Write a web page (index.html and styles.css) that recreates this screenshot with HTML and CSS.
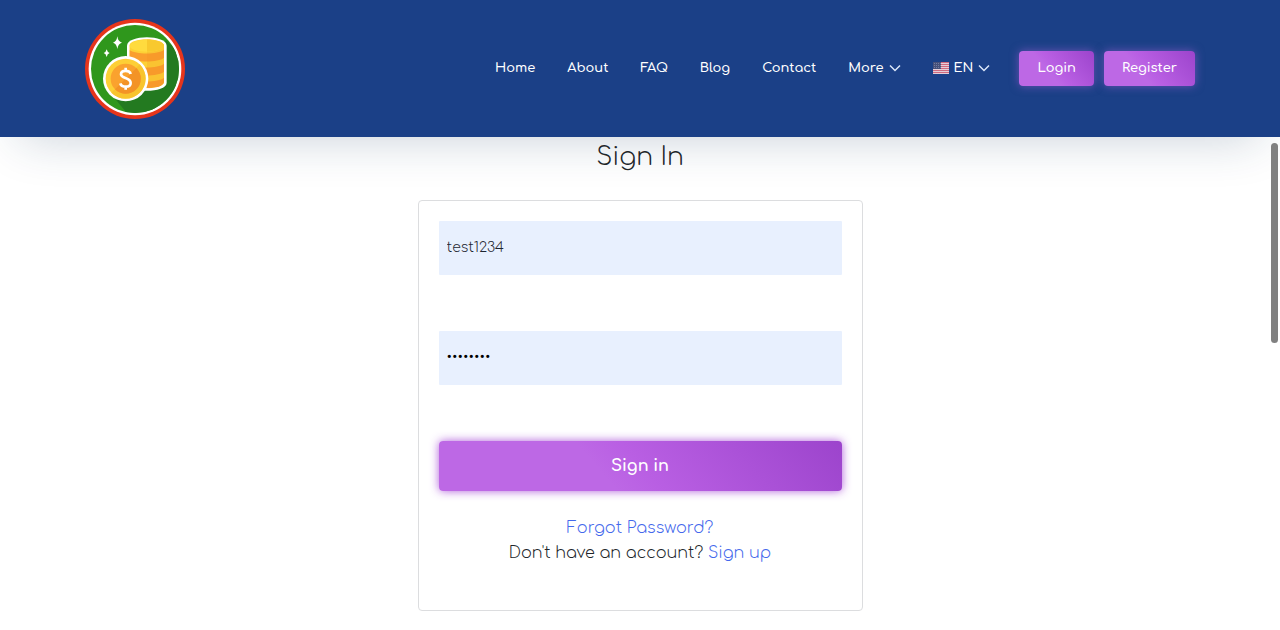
FILE: index.html
```html
<!DOCTYPE html>
<html lang="en">
<head>
<meta charset="utf-8">
<meta name="viewport" content="width=device-width, initial-scale=1">
<title>Sign In</title>
<link rel="stylesheet" href="styles.css">
</head>
<body>
<header class="header">
  <div class="header-inner">
    <a class="logo" href="#" aria-label="Home page">
      <svg viewBox="45 42 300 300" width="100" height="100" aria-hidden="true">
        <defs>
          <clipPath id="disc"><circle cx="195" cy="192" r="132"/></clipPath>
          <clipPath id="stack"><path d="M178 122C178 96 282 96 282 122V230C282 256 178 256 178 230Z"/></clipPath>
        </defs>
        <circle cx="195" cy="192" r="150" fill="#e6351b"/>
        <circle cx="195" cy="192" r="139" fill="#fff"/>
        <circle cx="195" cy="192" r="132" fill="#2f971c"/>
        <path clip-path="url(#disc)" d="M288 105L360 177V360H200L126 270L220 240Z" fill="#237a20"/>
        <path d="M171 122C171 88 290 88 290 122V233C290 265 171 265 171 233Z" fill="#fff"/>
        <g clip-path="url(#stack)">
          <rect x="175" y="95" width="112" height="160" fill="#fdd035"/>
          <path d="M178 134C196 149 264 149 282 134V158C264 173 196 173 178 158Z" fill="#fa9e2d"/>
          <path d="M178 176C196 191 264 191 282 176V200C264 215 196 215 178 200Z" fill="#fa9e2d"/>
          <path d="M178 218C196 233 264 233 282 218V240C264 252 196 252 178 240Z" fill="#fa9e2d"/>
          <rect x="231" y="95" width="52" height="160" fill="#f18a20" opacity=".18"/>
        </g>
        <ellipse cx="230" cy="122" rx="51" ry="18" fill="#ffdb3e"/>
        <path d="M231 104A51 18 0 0 1 231 140Z" fill="#f8c92e"/>
        <circle cx="167" cy="221" r="68" fill="#fff"/>
        <circle cx="167" cy="221" r="60" fill="#fdcf36"/>
        <path d="M124 263A60 60 0 0 0 209 178Z" fill="#f8c42e"/>
        <circle cx="167" cy="221" r="45" fill="#faa22e"/>
        <path d="M135 253A45 45 0 0 0 199 189Z" fill="#f39326"/>
        <path d="M182 207C179 195 153 194 153 208C153 222 182 216 182 234C182 249 154 248 151 235M167 188V199M167 243V254" fill="none" stroke="#fff" stroke-width="8"/>
        <path d="M142 94Q144 110 156 113Q144 116 142 132Q140 116 129 113Q140 110 142 94Z" fill="#fff"/>
        <path d="M110 133Q112 142 119 144Q112 146 110 156Q108 146 101 144Q108 142 110 133Z" fill="#fff"/>
      </svg>
    </a>
    <nav class="nav" aria-label="Main">
      <a class="nav-link" href="#">Home</a>
      <a class="nav-link" href="#">About</a>
      <a class="nav-link" href="#">FAQ</a>
      <a class="nav-link" href="#">Blog</a>
      <a class="nav-link" href="#">Contact</a>
      <button class="nav-menu" type="button">More
        <svg class="chevron" viewBox="0 0 12 8" width="12" height="8" aria-hidden="true"><path d="M1 1.5L6 6.5L11 1.5"/></svg>
      </button>
      <button class="nav-menu" type="button">
        <svg viewBox="0 0 16 12" width="16" height="12" aria-hidden="true">
          <rect width="16" height="12" fill="#e3cdd8"/>
          <path d="M0 .5H16M0 2.5H16M0 4.5H16M0 6.5H16M0 8.5H16M0 10.5H16" stroke="#cf6a80"/>
          <rect width="8" height="7" fill="#46507a"/>
          <path d="M1 1.5H8M1 3.5H8M1 5.5H8" stroke="#737ca0" stroke-dasharray="1 1"/>
        </svg>
        EN
        <svg class="chevron" viewBox="0 0 12 8" width="12" height="8" aria-hidden="true"><path d="M1 1.5L6 6.5L11 1.5"/></svg>
      </button>
    </nav>
    <div class="actions">
      <a class="button button-small" href="#">Login</a>
      <a class="button button-small" href="#">Register</a>
    </div>
  </div>
</header>
<main class="main">
  <h1 class="title">Sign In</h1>
  <form class="card">
    <input class="field" type="text" aria-label="Username" value="test1234">
    <input class="field field-password" type="password" aria-label="Password" value="test1234">
    <button class="button button-large" type="submit">Sign in</button>
    <p class="links"><a href="#">Forgot Password?</a><br>Don't have an account? <a href="#">Sign up</a></p>
  </form>
</main>
<div class="scroll-thumb"></div>
</body>
</html>
```
FILE: styles.css
```css
* { box-sizing: border-box; }
body {
  margin: 0;
  background: #fff;
  color: #212529;
  font-family: Comfortaa, Inter, "Open Sans", sans-serif;
  font-weight: 300;
}
a { text-decoration: none; }
.header {
  background: #1b4087;
  box-shadow: 0 20px 50px -20px rgba(22, 55, 90, 0.24);
}
.header-inner {
  display: flex;
  align-items: center;
  max-width: 1140px;
  margin: 0 auto;
  padding: 19px 15px 18px;
}
.logo { display: block; height: 100px; }
.nav {
  display: flex;
  align-items: center;
  gap: 32px;
  margin-left: auto;
}
.nav-link, .nav-menu {
  color: #fff;
  font-family: inherit;
  font-size: 13px;
  font-weight: 600;
  line-height: 22px;
  padding: 0 0 2px;
}
.nav-menu {
  display: flex;
  align-items: center;
  gap: 5px;
  border: 0;
  background: none;
}
.chevron { fill: none; stroke: #dce7fa; stroke-width: 1.5; }
.actions { display: flex; gap: 10px; margin-left: 29px; padding-bottom: 2px; }
.button {
  display: block;
  border: 0;
  border-radius: 4px;
  background: linear-gradient(50deg, #bd68e5 0%, #bd68e5 40%, #b95fe3 50%, #9c44cc 100%);
  color: #fff;
  font-family: inherit;
  text-align: center;
}
.button-small {
  padding: 0 18px;
  font-size: 13px;
  font-weight: 600;
  line-height: 35px;
  box-shadow: 0 0 10px rgba(189, 104, 229, 0.5);
}
.main { padding: 0 15px 19px; }
.title {
  margin: 0;
  padding: 5px 0 28px;
  font-size: 25px;
  font-weight: 300;
  line-height: 30px;
  text-align: center;
}
.card {
  max-width: 445px;
  margin: 0 auto;
  padding: 20px 20px 44px;
  border: 1px solid #dcdddf;
  border-radius: 4px;
  background: #fff;
}
.field {
  display: block;
  width: 100%;
  height: 54px;
  margin: 0 0 56px;
  padding: 0 8px 2px;
  border: 0;
  border-radius: 1px;
  background: #e8f0fe;
  color: #1d2530;
  font-family: inherit;
  font-size: 14px;
  font-weight: 300;
}
.field-password { padding-bottom: 4px; color: #000; font-family: Roboto, sans-serif; font-size: 17px; }
.button-large {
  width: 100%;
  font-size: 16px;
  font-weight: 700;
  line-height: 50px;
  padding: 0;
  box-shadow: 0 0 10px rgba(167, 77, 216, 0.9);
}
.links {
  margin: 25px 0 0;
  font-size: 16px;
  line-height: 25px;
  text-align: center;
}
.links a { color: #4468ec; }
.scroll-thumb {
  position: absolute;
  top: 143px;
  right: 2px;
  width: 7px;
  height: 200px;
  border-radius: 4px;
  background: #808080;
}
```
